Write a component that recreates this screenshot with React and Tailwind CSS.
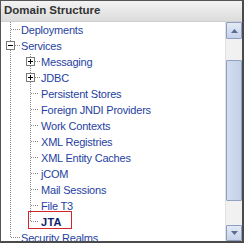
import React from "react";

const LINE = "#8a8a8a";

function Box({ x, plus }) {
  return (
    <g shapeRendering="crispEdges">
      <rect x={x - 3.5} y={3.5} width={8} height={8} fill="#fff" stroke="#7a7a7a" />
      <line x1={x - 2} y1={7.5} x2={x + 3} y2={7.5} stroke="#000" />
      {plus && <line x1={x + 0.5} y1={5} x2={x + 0.5} y2={10} stroke="#000" />}
    </g>
  );
}

function Cell({ width = 20, vFull = true, vHalf = false, hTo, box, plus, noH }) {
  const x = 9.5;
  return (
    <svg width={width} height={16} className="shrink-0 block">
      <g stroke={LINE} strokeDasharray="1 1" shapeRendering="crispEdges">
        {vFull && <line x1={x} y1={0} x2={x} y2={16} />}
        {vHalf && <line x1={x} y1={0} x2={x} y2={8} />}
        {!noH && hTo && <line x1={x} y1={7.5} x2={hTo} y2={7.5} />}
      </g>
      {box && <Box x={9} plus={plus} />}
    </svg>
  );
}

function Label({ children, bold }) {
  return (
    <span
      className={
        "whitespace-nowrap leading-[16px] text-[11px] " +
        (bold ? "font-bold text-[#0f1f6e] tracking-[0.3px]" : "text-[#1f3f9f] tracking-[-0.2px]")
      }
    >
      {children}
    </span>
  );
}

function L1({ children, box, plus, last }) {
  return (
    <div className="flex h-[16px] items-center">
      <Cell vFull={!last} vHalf={last} hTo={20} box={box} plus={plus} />
      <Label>{children}</Label>
    </div>
  );
}

function L2({ children, box, plus, last, bold, marked }) {
  return (
    <div className="relative flex h-[16px] items-center">
      <Cell hTo={20} noH />
      <Cell vFull={!last} vHalf={last} hTo={box ? 19 : 17} box={box} plus={plus} />
      <Label bold={bold}>{children}</Label>
      {marked && (
        <div className="absolute left-[27px] top-[-3px] w-[44px] h-[18px] border border-[#d3262b]" />
      )}
    </div>
  );
}

function Arrow({ up }) {
  return (
    <svg width="7" height="4" viewBox="0 0 7 4" className="block">
      {up ? (
        <path d="M0 4 L3.5 0 L7 4 Z" fill="#5a6c94" />
      ) : (
        <path d="M0 0 L3.5 4 L7 0 Z" fill="#5a6c94" />
      )}
    </svg>
  );
}

export default function App() {
  return (
    <div
      className="w-[246px] h-[244px] bg-white"
      style={{ fontFamily: '"Liberation Sans", Arial, sans-serif' }}
    >
      <div className="w-[244px] h-[243px] border-l border-t border-r-2 border-b-2 border-l-[#555] border-t-[#555] border-r-[#4a4a4a] border-b-[#4a4a4a] flex flex-col">
        <div className="h-[21px] shrink-0 flex items-center pl-[3px] bg-gradient-to-b from-[#f3f3f3] to-[#dcdcdc] border-b border-[#d0d0d0]">
          <span className="text-[11.5px] font-bold text-[#333] leading-none">Domain Structure</span>
        </div>
        <div className="flex flex-1 min-h-0">
          <div className="flex-1 overflow-hidden">
            <L1>Deployments</L1>
            <L1 box>Services</L1>
            <L2 box plus>Messaging</L2>
            <L2 box plus>JDBC</L2>
            <L2>Persistent Stores</L2>
            <L2>Foreign JNDI Providers</L2>
            <L2>Work Contexts</L2>
            <L2>XML Registries</L2>
            <L2>XML Entity Caches</L2>
            <L2>jCOM</L2>
            <L2>Mail Sessions</L2>
            <L2>File T3</L2>
            <L2 last bold marked>JTA</L2>
            <L1 last>Security Realms</L1>
          </div>
          <div className="w-[17px] shrink-0 flex flex-col bg-[#f1f1f1] border-l border-[#e2e2e2]">
            <div className="h-[17px] shrink-0 flex items-center justify-center border border-[#8d9ec0] rounded-[1px] bg-gradient-to-b from-[#e3eaf6] to-[#c5d2e9]">
              <Arrow up />
            </div>
            <div className="h-[21px] shrink-0" />
            <div className="h-[141px] shrink-0 border border-[#8fa2c4] rounded-[1px] bg-gradient-to-r from-[#d3ddef] to-[#c3d0e8]" />
            <div className="flex-1" />
            <div className="h-[16px] shrink-0 flex items-center justify-center border border-[#8d9ec0] rounded-[1px] bg-gradient-to-b from-[#e3eaf6] to-[#c5d2e9]">
              <Arrow />
            </div>
          </div>
        </div>
      </div>
    </div>
  );
}
